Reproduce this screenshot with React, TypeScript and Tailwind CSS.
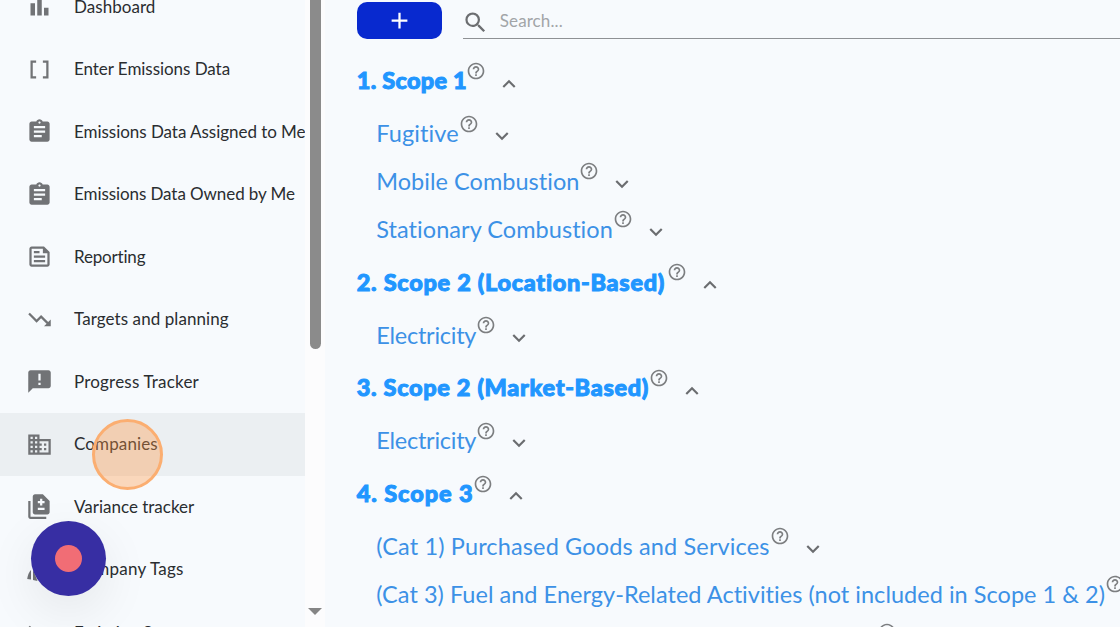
import type { IconType } from 'react-icons';
import {
	MdAdd,
	MdAnnouncement,
	MdAssignment,
	MdBarChart,
	MdBusiness,
	MdDataArray,
	MdDifference,
	MdExpandLess,
	MdExpandMore,
	MdHelpOutline,
	MdOutlineFeed,
	MdSearch,
	MdTrendingDown,
} from 'react-icons/md';
import clsx from 'clsx';

interface NavItem {
	label: string;
	icon: IconType | typeof TagsIcon;
	tracking: string;
	active?: boolean;
}

interface ScopeRow {
	label: string;
	className: string;
	heading?: boolean;
}

function TagsIcon({ className }: { className?: string }) {
	return (
		<svg viewBox="0 0 27 27" fill="currentColor" className={className}>
			<path d="M1.2 23Q2 17 5 14v9.5z" />
			<path d="M7 13.5 11.5 25 7 24z" />
			<path d="M22 13.5 25.5 23H18z" />
		</svg>
	);
}

const NAV_ITEMS: NavItem[] = [
	{ label: 'Dashboard', icon: MdBarChart, tracking: 'tracking-[0.05px]' },
	{ label: 'Enter Emissions Data', icon: MdDataArray, tracking: 'tracking-[-0.05px]' },
	{ label: 'Emissions Data Assigned to Me', icon: MdAssignment, tracking: 'tracking-[-0.04px]' },
	{ label: 'Emissions Data Owned by Me', icon: MdAssignment, tracking: 'tracking-[-0.08px]' },
	{ label: 'Reporting', icon: MdOutlineFeed, tracking: 'tracking-[-0.18px]' },
	{ label: 'Targets and planning', icon: MdTrendingDown, tracking: 'tracking-[0.08px]' },
	{ label: 'Progress Tracker', icon: MdAnnouncement, tracking: 'tracking-[0.2px]' },
	{ label: 'Companies', icon: MdBusiness, tracking: 'tracking-[0.12px]', active: true },
	{ label: 'Variance tracker', icon: MdDifference, tracking: 'tracking-normal' },
	{ label: 'Company Tags', icon: TagsIcon, tracking: 'tracking-[0.22px]' },
	{ label: 'Emission Sources', icon: MdTrendingDown, tracking: 'tracking-[-0.1px]' },
];

const ROWS: ScopeRow[] = [
	{ label: '1. Scope 1', className: 'w-[109.2px] tracking-[0.25px]', heading: true },
	{ label: 'Fugitive', className: 'w-[82.5px] tracking-[0.1px]' },
	{ label: 'Mobile Combustion', className: 'w-[202.5px] tracking-[0.03px]' },
	{ label: 'Stationary Combustion', className: 'w-[236.5px] tracking-[0.05px]' },
	{ label: '2. Scope 2 (Location-Based)', className: 'w-[310px] tracking-[0.7px]', heading: true },
	{ label: 'Electricity', className: 'w-[100px] tracking-[-0.25px]' },
	{ label: '3. Scope 2 (Market-Based)', className: 'w-[292.5px] tracking-[0.67px]', heading: true },
	{ label: 'Electricity', className: 'w-[100px] tracking-[-0.25px]' },
	{ label: '4. Scope 3', className: 'w-[116.5px] tracking-[0.9px]', heading: true },
	{ label: '(Cat 1) Purchased Goods and Services', className: 'w-[393.5px] tracking-[0.14px]' },
	{
		label: '(Cat 3) Fuel and Energy-Related Activities (not included in Scope 1 & 2)',
		className: 'w-[728.5px] tracking-[0.03px]',
	},
	{ label: '(Cat 4) Upstream Transportation and Distribution', className: 'w-[501px]' },
];

function NavRow({ item }: { item: NavItem }) {
	const Icon = item.icon;
	return (
		<li
			className={clsx(
				'flex h-[62.5px] shrink-0 items-center pl-[26px] last:pt-[2px]',
				item.active && 'bg-[#ebeff2]',
			)}
		>
			<Icon className="size-[27px] shrink-0 text-[#717376]" />
			<span
				className={clsx('mb-[0.5px] ml-[21px] text-[17px] whitespace-nowrap text-[#2a2d30]', item.tracking)}
			>
				{item.label}
			</span>
		</li>
	);
}

function ScopeLine({ row }: { row: ScopeRow }) {
	const Chevron = row.heading ? MdExpandLess : MdExpandMore;
	return (
		<div className={clsx('flex shrink-0 items-center', row.heading ? 'h-[58px]' : 'h-[47.75px] pl-[19.5px]')}>
			<span
				className={clsx(
					'mb-[2px] shrink-0 text-[23.5px] whitespace-nowrap [font-variant-ligatures:none]',
					row.heading
						? 'font-black text-[#2196ff] [-webkit-text-stroke:1px_#2196ff]'
						: 'text-[#3c91e6]',
					row.className,
				)}
			>
				{row.label}
			</span>
			<MdHelpOutline className="mb-[22.5px] size-5 shrink-0 text-[#7c7e80]" />
			<Chevron className="mt-[3px] ml-[10.1px] size-[26px] shrink-0 text-[#6b6d70]" />
		</div>
	);
}

export default function App() {
	return (
		<div className="relative flex h-[627px] w-[1120px] overflow-hidden bg-[#f7fafd] font-['Lato',sans-serif]">
			<nav className="w-[305.4px] shrink-0">
				<ul className="-mt-[24.5px] flex flex-col">
					{NAV_ITEMS.map((item) => (
						<NavRow key={item.label} item={item} />
					))}
				</ul>
			</nav>

			<div className="flex w-5 shrink-0 flex-col items-center justify-between bg-[#fcfcfd]">
				<div className="h-[349px] w-[11px] rounded-b-full bg-[#8b8b8b]" />
				<svg viewBox="0 0 14 7" className="mb-3 h-[7px] w-[14px] fill-[#858585]">
					<path d="M0 0h14L7 7z" />
				</svg>
			</div>

			<main className="flex min-w-0 flex-1 flex-col overflow-hidden pl-[31.4px]">
				<div className="flex h-[39px] shrink-0 items-end">
					<button
						type="button"
						className="flex h-[37px] w-[85px] items-center justify-center rounded-[10px] bg-[#0829cf]"
					>
						<MdAdd className="size-[27px] text-white" />
					</button>
					<div className="ml-[21px] flex h-[38px] flex-1 items-center border-b border-[#8e9194]">
						<MdSearch className="mt-[5px] -ml-px size-[27px] text-[#6c6e71]" />
						<span className="mt-[2px] ml-[11px] text-[17px] tracking-[0.1px] text-[#a2a5a8]">Search...</span>
					</div>
				</div>
				<div className="mt-[14px] flex flex-col">
					{ROWS.map((row, i) => (
						<ScopeLine key={i} row={row} />
					))}
				</div>
			</main>

			<div className="absolute top-[418.5px] left-[92.4px] size-[71px] rounded-full border-[3px] border-[#fbae71] bg-[#ff9440]/35" />
			<div className="absolute top-[521px] left-[31px] flex size-[75px] items-center justify-center rounded-full bg-[#372ea3] shadow-[0_16px_50px_rgba(0,0,0,0.08)]">
				<div className="size-[27px] rounded-full bg-[#f16d75]" />
			</div>
		</div>
	);
}
